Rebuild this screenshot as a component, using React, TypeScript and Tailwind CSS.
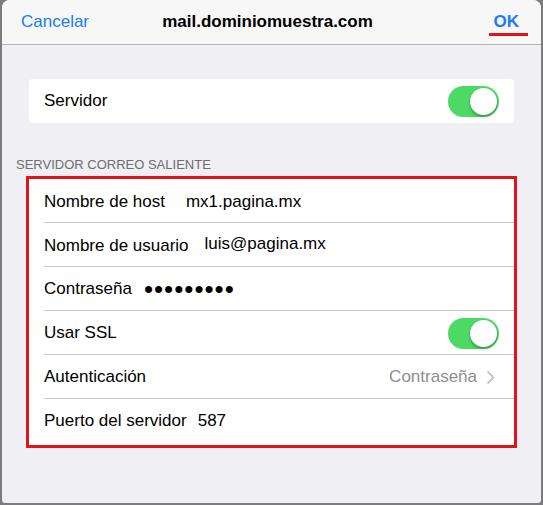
import React from "react";

const font = { fontFamily: '"Liberation Sans", Arial, sans-serif' };

function Toggle() {
  return (
    <div className="relative h-[31px] w-[51px] shrink-0 rounded-full bg-[#4cd964]">
      <div className="absolute right-[2px] top-[2px] h-[27px] w-[27px] rounded-full bg-white shadow-[0_2px_3px_rgba(0,0,0,0.3)]" />
    </div>
  );
}

function Row({
  children,
  last = false,
  h = "h-[44px]",
}: {
  children: React.ReactNode;
  last?: boolean;
  h?: string;
}) {
  return (
    <div className={`relative flex items-center pl-[15px] pr-[15px] ${h}`}>
      {children}
      {!last && (
        <div className="absolute bottom-0 left-[15px] right-0 h-px bg-[#c8c7cc]" />
      )}
    </div>
  );
}

export default function App() {
  return (
    <div
      className="flex h-[505px] w-[543px] flex-col bg-[#7c7c7c] px-[2px] pb-[2px]"
      style={font}
    >
      <div className="flex flex-1 flex-col overflow-hidden rounded-t-[8px] rounded-b-[3px] bg-[#efeff4] text-[17px] text-black">
        {/* Header */}
        <div className="relative flex h-[45px] shrink-0 items-center border-b border-[#b4b4b8] bg-[#f7f7f8] px-[19px]">
          <span className="text-[#1a7cf6]">Cancelar</span>
          <span className="absolute left-0 right-[8px] text-center font-bold">
            mail.dominiomuestra.com
          </span>
          <span className="relative ml-auto mr-[3px] font-bold text-[#1a7cf6]">
            OK
            <span className="absolute left-[-5px] right-[-9px] top-[24px] h-[3px] bg-[#e0121a]" />
          </span>
        </div>

        {/* Body */}
        <div className="flex flex-col px-[27px] pt-[34px]">
          <div className="flex h-[44px] items-center justify-between rounded-[4px] bg-white pl-[15px] pr-[15px]">
            <span>Servidor</span>
            <Toggle />
          </div>

          <div className="-ml-[13px] pb-[3px] pt-[34px] text-[13px] leading-[16px] text-[#6d6d72]">
            SERVIDOR CORREO SALIENTE
          </div>

          <div className="-mx-[3px] border-[3px] border-[#e0121a] bg-white">
            <Row>
              <span className="pt-[2px]">Nombre de host</span>
              <span className="ml-[21px] pt-[2px]">mx1.pagina.mx</span>
            </Row>
            <Row>
              <span className="pt-[2px]">Nombre de usuario</span>
              <span className="ml-[16px] -mt-[3px]">luis@pagina.mx</span>
            </Row>
            <Row>
              <span>Contraseña</span>
              <span className="ml-[12px] text-[26px] leading-[20px] tracking-[1px]">•••••••••</span>
            </Row>
            <Row>
              <span>Usar SSL</span>
              <span className="ml-auto">
                <Toggle />
              </span>
            </Row>
            <Row>
              <span>Autenticación</span>
              <span className="ml-auto text-[#8e8e93]">Contraseña</span>
              <svg
                className="ml-[9px] mr-[4px]"
                width="9"
                height="15"
                viewBox="0 0 9 15"
                fill="none"
              >
                <path
                  d="M1.5 1.5 L7.5 7.5 L1.5 13.5"
                  stroke="#c7c7cc"
                  strokeWidth="2"
                />
              </svg>
            </Row>
            <Row last h="h-[46px] pb-[2px]">
              <span>Puerto del servidor</span>
              <span className="ml-[11px]">587</span>
            </Row>
          </div>
        </div>
      </div>
    </div>
  );
}
